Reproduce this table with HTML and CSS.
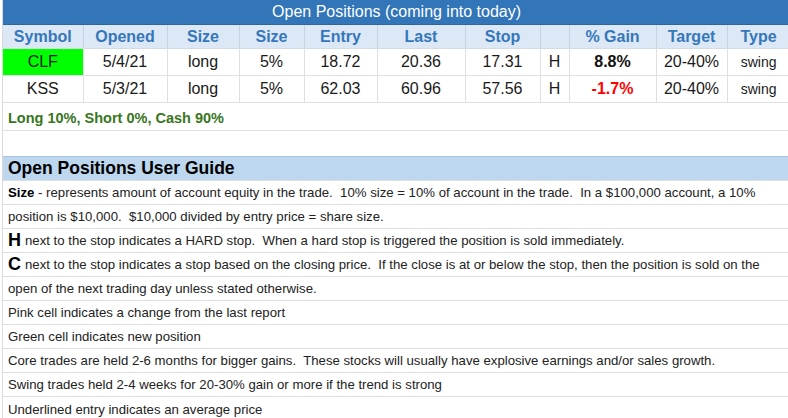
FILE: index.html
```html
<!DOCTYPE html>
<html>
<head>
<meta charset="utf-8">
<link rel="stylesheet" href="styles.css">
</head>
<body>
<div class="sheet">
  <table class="pos">
    <colgroup>
      <col class="c1"><col class="c2"><col class="c3"><col class="c4"><col class="c5"><col class="c6"><col class="c7"><col class="c8"><col class="c9"><col class="c10"><col class="c11">
    </colgroup>
    <tr class="title"><td colspan="11">Open Positions (coming into today)</td></tr>
    <tr class="head">
      <td>Symbol</td><td>Opened</td><td>Size</td><td>Size</td><td>Entry</td><td>Last</td><td>Stop</td><td></td><td>% Gain</td><td>Target</td><td>Type</td>
    </tr>
    <tr class="data">
      <td class="new">CLF</td><td>5/4/21</td><td>long</td><td>5%</td><td>18.72</td><td>20.36</td><td>17.31</td><td>H</td><td class="gain">8.8%</td><td>20-40%</td><td class="type">swing</td>
    </tr>
    <tr class="data">
      <td>KSS</td><td>5/3/21</td><td>long</td><td>5%</td><td>62.03</td><td>60.96</td><td>57.56</td><td>H</td><td class="loss">-1.7%</td><td>20-40%</td><td class="type">swing</td>
    </tr>
  </table>
  <div class="row alloc">Long 10%, Short 0%, Cash 90%</div>
  <div class="row empty"></div>
  <div class="row guide-head">Open Positions User Guide</div>
  <div class="row g"><b>Size</b>&nbsp;- represents amount of account equity in the trade.&nbsp; 10% size = 10% of account in the trade.&nbsp; In a $100,000 account, a 10%</div>
  <div class="row g">position is $10,000.&nbsp; $10,000 divided by entry price = share size.</div>
  <div class="row g"><b class="big">H</b> next to the stop indicates a HARD stop.&nbsp; When a hard stop is triggered the position is sold immediately.</div>
  <div class="row g"><b class="big">C</b> next to the stop indicates a stop based on the closing price.&nbsp; If the close is at or below the stop, then the position is sold on the</div>
  <div class="row g">open of the next trading day unless stated otherwise.</div>
  <div class="row g">Pink cell indicates a change from the last report</div>
  <div class="row g">Green cell indicates new position</div>
  <div class="row g">Core trades are held 2-6 months for bigger gains.&nbsp; These stocks will usually have explosive earnings and/or sales growth.</div>
  <div class="row g">Swing trades held 2-4 weeks for 20-30% gain or more if the trend is strong</div>
  <div class="row g last">Underlined entry indicates an average price</div>
</div>
</body>
</html>
```
FILE: styles.css
```css
html, body {
  margin: 0;
  padding: 0;
  background: #ffffff;
}
body {
  width: 788px;
  height: 418px;
  overflow: hidden;
  font-family: "Liberation Sans", Arial, sans-serif;
  color: #000;
}
.sheet {
  margin-left: 2px;
  border-left: 1px solid #d9d9d9;
  width: 800px;
}
.pos {
  border-collapse: collapse;
  table-layout: fixed;
  width: 787px;
}
.c1 { width: 80px; }
.c2 { width: 84px; }
.c3 { width: 72px; }
.c4 { width: 65px; }
.c5 { width: 73px; }
.c6 { width: 88px; }
.c7 { width: 75px; }
.c8 { width: 29px; }
.c9 { width: 87px; }
.c10 { width: 71px; }
.c11 { width: 63px; }
.pos td {
  padding: 0;
  text-align: center;
  white-space: nowrap;
  overflow: hidden;
}
.title td {
  height: 24px;
  background: #3275b8;
  color: #ffffff;
  font-size: 16px;
  line-height: 24px;
  border-bottom: 1px solid #2c66a0;
}
.head td {
  height: 23px;
  line-height: 23px;
  background: #dce8f5;
  color: #3577ba;
  font-weight: bold;
  font-size: 16px;
  border-right: 1px solid #c6d4e2;
  border-bottom: 1px solid #d3dbe3;
}
.data td {
  height: 24px;
  line-height: 24px;
  font-size: 16px;
  color: #1a1a1a;
  border-right: 1px solid #e0e0e0;
  border-bottom: 1px solid #e0e0e0;
  vertical-align: middle;
}
.data td.new {
  background: #00ff00;
}
.data td.gain {
  font-weight: bold;
  color: #111;
}
.data td.loss {
  font-weight: bold;
  color: #ff0000;
}
.data td.type {
  font-size: 14px;
  line-height: 26px;
}
.row {
  height: 23px;
  border-bottom: 1px solid #e0e0e0;
  box-sizing: content-box;
  white-space: nowrap;
  padding-left: 5px;
  font-size: 13.2px;
  color: #222;
  display: flex;
  align-items: flex-end;
  padding-bottom: 0;
}
.alloc {
  height: 24px;
  padding-top: 3px;
  color: #38761d;
  font-weight: bold;
  font-size: 14.5px;
  align-items: center;
}
.empty {
  height: 25px;
  border-bottom: 1px solid #a9c4df;
}
.guide-head {
  height: 23px;
  background: #bdd7ee;
  font-weight: bold;
  font-size: 17.5px;
  color: #000;
  align-items: center;
}
.g {
  line-height: 23px;
  align-items: center;
}
.g b {
  color: #000;
}
.g b.big {
  font-size: 18px;
  margin-right: 4px;
}
.last {
  height: 25px;
  border-bottom: none;
}
```
